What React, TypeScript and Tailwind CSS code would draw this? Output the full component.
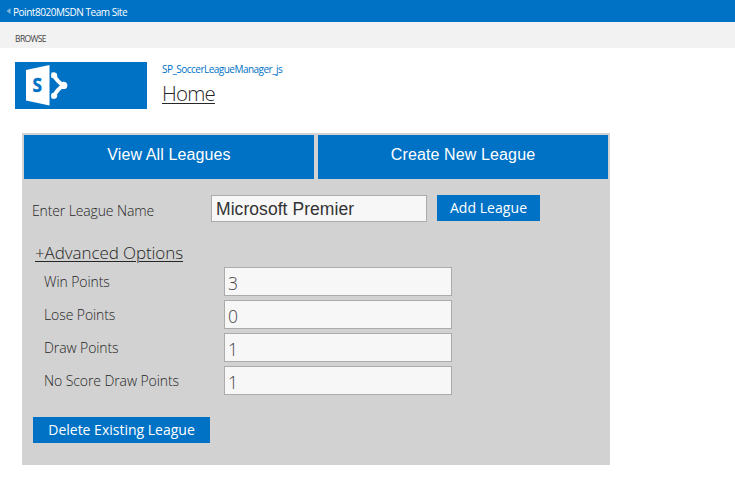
const fields = [
  { label: "Win Points", value: "3" },
  { label: "Lose Points", value: "0" },
  { label: "Draw Points", value: "1" },
  { label: "No Score Draw Points", value: "1" },
];

function SharePointLogo() {
  return (
    <svg width="42" height="42" viewBox="0 0 42 42" className="ml-[11px] mt-[3px]">
      <path d="M0 5 L23.5 0 V40.5 L0 35.5 Z" fill="#fff" />
      <text x="11.2" y="27.2" textAnchor="middle" fontSize="19.5" fontWeight="700" fill="#0072c6" stroke="#0072c6" strokeWidth="0.4" fontFamily="'Open Sans', sans-serif" textLength="9.5" lengthAdjust="spacingAndGlyphs">S</text>
      <path d="M28 10.4 Q31 16.5 37.5 20.4 Q31 24.5 28.2 30.8" fill="none" stroke="#fff" strokeWidth="4" />
      <path d="M25.5 7.5 H29 V13.5 L25.5 12.8 Z" fill="#fff" />
      <circle cx="28.2" cy="10.4" r="3" fill="#fff" />
      <circle cx="37.6" cy="20.4" r="3.7" fill="#fff" />
      <circle cx="28.2" cy="30.8" r="3" fill="#fff" />
      <path d="M25.5 28.5 L29 27.5 V33.5 H25.5 Z" fill="#fff" />
    </svg>
  );
}

export default function App() {
  return (
    <div className="h-[478px] w-[735px] overflow-hidden bg-white font-['Open_Sans',sans-serif] text-[#262626]">
      <header className="flex h-[22px] items-center bg-[#0072c6] pl-[6px] text-white">
        <svg width="5" height="8" viewBox="0 0 5 8"><path d="M4.5 1 L.5 4 L4.5 7 Z" fill="#83b8df" /></svg>
        <span className="ml-[2px] mt-px whitespace-nowrap text-[10px] leading-[22px] tracking-[-0.46px]">Point8020MSDN Team Site</span>
      </header>
      <nav className="h-[26px] bg-[#f2f2f2] pl-[15px] text-[8.5px] leading-[33px] tracking-[-0.6px] text-[#444]">BROWSE</nav>
      <div className="flex h-[85px] pl-[15px] pt-[14px]">
        <div className="h-[47px] w-[132px] bg-[#0072c6]"><SharePointLogo /></div>
        <div className="ml-[15px] whitespace-nowrap">
          <div className="h-[15px] text-[10px] leading-[15px] tracking-[-0.52px] text-[#0072c6]">SP_SoccerLeagueManager_js</div>
          <h1 className="mt-px text-[20.5px] font-light leading-[30px] tracking-[-0.8px] underline decoration-1 underline-offset-2">Home</h1>
        </div>
      </div>
      <main className="ml-[22px] h-[332px] w-[588px] whitespace-nowrap bg-[#d2d2d2] pt-[2px]">
        <div className="flex gap-1 px-[2px] font-['Liberation_Sans',Arial,sans-serif] text-[16px] tracking-[0.12px] text-white">
          <button className="h-[44px] flex-1 bg-[#0072c6] pb-[4px]">View All Leagues</button>
          <button className="h-[44px] flex-1 bg-[#0072c6] pb-[4px]">Create New League</button>
        </div>
        <div className="mt-[16px] flex h-[27px] pl-[10px]">
          <label className="w-[179px] text-[14px] font-light leading-[31px] tracking-[-0.13px]">Enter League Name</label>
          <input className="h-[27px] w-[216px] border border-[#ababab] bg-[#f7f7f7] px-[4px] pt-px font-['Liberation_Sans',Arial,sans-serif] text-[17.5px] tracking-[0.06px] text-[#333]" defaultValue="Microsoft Premier" />
          <button className="ml-[10px] h-[26px] w-[103px] bg-[#0072c6] text-[14px] leading-[24px] tracking-[0.05px] text-white">Add League</button>
        </div>
        <div className="ml-[13px] mt-[17px] h-[28px] text-[17px] font-light leading-[27px] tracking-[-0.08px] underline decoration-1 underline-offset-2">+Advanced Options</div>
        <div className="flex flex-col gap-1">
          {fields.map((f) => (
            <div key={f.label} className="flex h-[29px] pl-[22px]">
              <label className="w-[180px] text-[14px] font-light leading-[30px] tracking-[-0.09px]">{f.label}</label>
              <input className="h-[29px] w-[228px] border border-[#ababab] bg-[#f7f7f7] px-[3px] pt-[2px] text-[17.5px] font-light text-[#444]" defaultValue={f.value} />
            </div>
          ))}
        </div>
        <button className="ml-[11px] mt-[22px] h-[26px] w-[177px] bg-[#0072c6] pb-px text-[14px] leading-[24px] text-white">Delete Existing League</button>
      </main>
    </div>
  );
}
